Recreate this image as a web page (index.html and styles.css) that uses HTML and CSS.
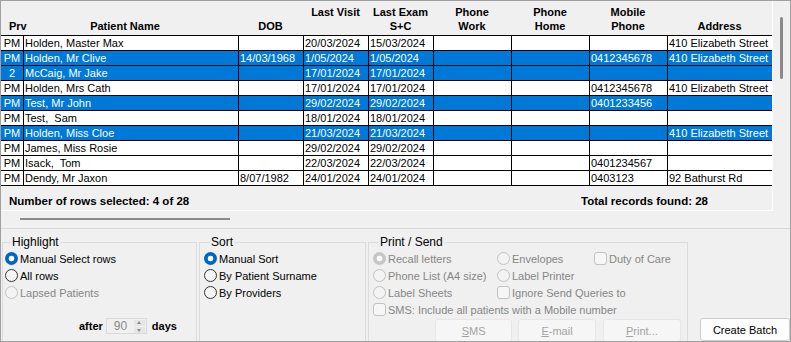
FILE: index.html
```html
<!DOCTYPE html>
<html lang="en">
<head>
    <meta charset="UTF-8">
    <title>Recall Batch</title>
    <link rel="stylesheet" href="styles.css">
</head>
<body>
<div class="window">
    <div class="top">
        <div class="grid-area">
            <div class="grid-panel">
                <!-- Column headers -->
                <div class="row head">
                    <div class="hc prv">Prv</div>
                    <div class="hc name">Patient Name</div>
                    <div class="hc">DOB</div>
                    <div class="hc">Last Visit<br>&nbsp;</div>
                    <div class="hc">Last Exam<br>S+C</div>
                    <div class="hc">Phone<br>Work</div>
                    <div class="hc">Phone<br>Home</div>
                    <div class="hc">Mobile<br>Phone</div>
                    <div class="hc">Address</div>
                </div>

                <div class="rows">
                    <div class="row">
                        <div class="c ctr">PM</div><div class="c">Holden, Master Max</div><div class="c"></div>
                        <div class="c">20/03/2024</div><div class="c">15/03/2024</div><div class="c"></div>
                        <div class="c"></div><div class="c"></div><div class="c">410 Elizabeth Street</div>
                    </div>
                    <div class="row sel">
                        <div class="c ctr">PM</div><div class="c">Holden, Mr Clive</div><div class="c">14/03/1968</div>
                        <div class="c">1/05/2024</div><div class="c">1/05/2024</div><div class="c"></div>
                        <div class="c"></div><div class="c">0412345678</div><div class="c">410 Elizabeth Street</div>
                    </div>
                    <div class="row sel">
                        <div class="c ctr">2</div><div class="c">McCaig, Mr Jake</div><div class="c"></div>
                        <div class="c">17/01/2024</div><div class="c">17/01/2024</div><div class="c"></div>
                        <div class="c"></div><div class="c"></div><div class="c"></div>
                    </div>
                    <div class="row">
                        <div class="c ctr">PM</div><div class="c">Holden, Mrs Cath</div><div class="c"></div>
                        <div class="c">17/01/2024</div><div class="c">17/01/2024</div><div class="c"></div>
                        <div class="c"></div><div class="c">0412345678</div><div class="c">410 Elizabeth Street</div>
                    </div>
                    <div class="row sel">
                        <div class="c ctr">PM</div><div class="c">Test, Mr John</div><div class="c"></div>
                        <div class="c">29/02/2024</div><div class="c">29/02/2024</div><div class="c"></div>
                        <div class="c"></div><div class="c">0401233456</div><div class="c"></div>
                    </div>
                    <div class="row">
                        <div class="c ctr">PM</div><div class="c">Test,&nbsp; Sam</div><div class="c"></div>
                        <div class="c">18/01/2024</div><div class="c">18/01/2024</div><div class="c"></div>
                        <div class="c"></div><div class="c"></div><div class="c"></div>
                    </div>
                    <div class="row sel">
                        <div class="c ctr">PM</div><div class="c">Holden, Miss Cloe</div><div class="c"></div>
                        <div class="c">21/03/2024</div><div class="c">21/03/2024</div><div class="c"></div>
                        <div class="c"></div><div class="c"></div><div class="c">410 Elizabeth Street</div>
                    </div>
                    <div class="row">
                        <div class="c ctr">PM</div><div class="c">James, Miss Rosie</div><div class="c"></div>
                        <div class="c">29/02/2024</div><div class="c">29/02/2024</div><div class="c"></div>
                        <div class="c"></div><div class="c"></div><div class="c"></div>
                    </div>
                    <div class="row">
                        <div class="c ctr">PM</div><div class="c">Isack,&nbsp; Tom</div><div class="c"></div>
                        <div class="c">22/03/2024</div><div class="c">22/03/2024</div><div class="c"></div>
                        <div class="c"></div><div class="c">0401234567</div><div class="c"></div>
                    </div>
                    <div class="row">
                        <div class="c ctr">PM</div><div class="c">Dendy, Mr Jaxon</div><div class="c">8/07/1982</div>
                        <div class="c">24/01/2024</div><div class="c">24/01/2024</div><div class="c"></div>
                        <div class="c"></div><div class="c">0403123</div><div class="c">92 Bathurst Rd</div>
                    </div>
                </div>

                <div class="grid-footer">
                    <span>Number of rows selected: 4 of 28</span>
                    <span>Total records found: 28</span>
                </div>
            </div>
            <div class="vscroll"><div class="thumb"></div></div>
        </div>
        <div class="hscroll"><div class="thumb"></div></div>
    </div>

    <div class="bottom">
        <fieldset class="group highlight">
            <legend>Highlight</legend>
            <div class="opt"><span class="radio on"></span>Manual Select rows</div>
            <div class="opt"><span class="radio"></span>All rows</div>
            <div class="opt off"><span class="radio"></span>Lapsed Patients</div>
            <div class="after">
                <b>after</b>
                <div class="spin">
                    <span class="spin-val">90</span>
                    <span class="spin-btns">
                        <span class="spin-up"></span>
                        <span class="spin-down"></span>
                    </span>
                </div>
                <b>days</b>
            </div>
        </fieldset>

        <fieldset class="group sort">
            <legend>Sort</legend>
            <div class="opt"><span class="radio on"></span>Manual Sort</div>
            <div class="opt"><span class="radio"></span>By Patient Surname</div>
            <div class="opt"><span class="radio"></span>By Providers</div>
        </fieldset>

        <fieldset class="group print">
            <legend>Print / Send</legend>
            <div class="print-grid">
                <div class="opt off"><span class="radio on"></span>Recall letters</div>
                <div class="opt off"><span class="radio"></span>Envelopes</div>
                <div class="opt off"><span class="check"></span>Duty of Care</div>
                <div class="opt off"><span class="radio"></span>Phone List (A4 size)</div>
                <div class="opt off span2"><span class="radio"></span>Label Printer</div>
                <div class="opt off"><span class="radio"></span>Label Sheets</div>
                <div class="opt off span2"><span class="check"></span>Ignore Send Queries to</div>
                <div class="opt off span3"><span class="check"></span>SMS: Include all patients with a Mobile number</div>
            </div>
            <div class="send-btns">
                <button class="btn dim"><u>S</u>MS</button>
                <button class="btn dim"><u>E</u>-mail</button>
                <button class="btn dim"><u>P</u>rint...</button>
            </div>
        </fieldset>

        <button class="btn create">Create Batch</button>
    </div>
</div>
</body>
</html>
```

FILE: styles.css
```css
body {
    margin: 0;
    font-family: "Liberation Sans", Arial, sans-serif;
    font-size: 11px;
    color: #000;
    background: #f0f0f0;
}
.window {
    width: 791px;
    height: 342px;
    box-sizing: border-box;
    border: 1px solid #a0a0a0;
    overflow: hidden;
    background: #f0f0f0;
}

/* upper grid */
.top {
    border-bottom: 1px solid #d9d9d9;
}
.grid-area {
    display: flex;
}
.grid-panel {
    width: 771px;
    border-right: 1px solid #fff;
    border-bottom: 1px solid #fff;
}
.row {
    display: grid;
    grid-template-columns: 22px 215px 65px 65px 65px 78px 78px 78px 105px;
    height: 15px;
    box-sizing: border-box;
    border-bottom: 1px solid #000;
    background: #fff;
}
.row.sel {
    background: #0078d7;
    color: #fff;
}
.row.head {
    height: 34px;
    border-bottom: none;
    background: #f0f0f0;
}
.hc {
    display: flex;
    flex-direction: column;
    justify-content: flex-end;
    padding-bottom: 2px;
    font-weight: bold;
    line-height: 14px;
    text-align: center;
}
.hc.prv {
    text-align: left;
    padding-left: 8px;
    white-space: nowrap;
}
.hc.name {
    padding-right: 11px;
}
.rows {
    border-top: 1px solid #000;
}
.c {
    line-height: 15px;
    height: 14px;
    padding-left: 1px;
    white-space: nowrap;
    overflow: hidden;
    border-left: 1px solid #000;
}
.c:first-child {
    border-left: none;
}
.c.ctr {
    text-align: center;
    padding-left: 0;
}
.grid-footer {
    display: flex;
    justify-content: space-between;
    height: 24px;
    box-sizing: border-box;
    padding: 8px 64px 0 8px;
    line-height: 14px;
    font-size: 11.5px;
    font-weight: bold;
    background: #f0f0f0;
}
.vscroll {
    flex: 1;
}
.vscroll .thumb {
    width: 3px;
    height: 62px;
    margin: 16px 0 0 7px;
    border-radius: 2px;
    background: #8a8a8a;
}
.hscroll {
    height: 17px;
    box-sizing: border-box;
    padding-top: 7px;
}
.hscroll .thumb {
    width: 210px;
    height: 2px;
    margin-left: 19px;
    background: #8a8a8a;
}

/* lower options */
.bottom {
    display: flex;
    align-items: flex-start;
    height: 112px;
    padding-top: 6px;
    box-sizing: border-box;
}
.group {
    margin: 0 0 0 2px;
    padding: 1px 0 0 4px;
    height: 113px;
    box-sizing: border-box;
    border: 1px solid #dcdcdc;
    min-width: 0;
}
.group legend {
    margin-left: 6px;
    padding: 0 1px;
    font-size: 12px;
    line-height: 14px;
}
.highlight {
    margin-left: 1px;
    width: 195px;
    padding-left: 2px;
}
.sort {
    width: 167px;
}
.print {
    width: 320px;
    padding-left: 4px;
}
.opt {
    display: flex;
    align-items: center;
    gap: 2px;
    height: 17px;
    white-space: nowrap;
}
.opt.off {
    color: #868686;
}
.radio {
    width: 13px;
    height: 13px;
    box-sizing: border-box;
    border: 1px solid #333;
    border-radius: 50%;
    background: #f5f5f5;
    flex: none;
}
.radio.on {
    border: none;
    background: radial-gradient(circle, #fff 0 2.5px, #0067c0 3.2px);
}
.off .radio {
    border-color: #c2c2c2;
    background: #f3f3f3;
}
.off .radio.on {
    border: none;
    background: radial-gradient(circle, #fff 0 2.5px, #c6c6c6 3.2px);
}
.check {
    width: 13px;
    height: 13px;
    box-sizing: border-box;
    border: 1px solid #c2c2c2;
    border-radius: 3px;
    background: #f6f6f6;
    flex: none;
}
.after {
    display: flex;
    align-items: center;
    margin: 17px 0 0 74px;
    height: 16px;
}
.after b {
    font-weight: bold;
}
.spin {
    display: flex;
    align-items: center;
    width: 41px;
    height: 16px;
    box-sizing: border-box;
    margin: 0 5px 0 3px;
    border: 1px solid #dadada;
    background: #f0f0f0;
}
.spin-val {
    flex: 1;
    padding-left: 7px;
    color: #8a8a8a;
    font-size: 12px;
}
.spin-btns {
    display: flex;
    flex-direction: column;
    gap: 1px;
    margin-right: 1px;
}
.spin-up,
.spin-down {
    display: block;
    width: 11px;
    height: 6px;
    position: relative;
    background: #e6e6e6;
}
.spin-up::after,
.spin-down::after {
    content: "";
    position: absolute;
    left: 3px;
    border-left: 2.5px solid transparent;
    border-right: 2.5px solid transparent;
}
.spin-up::after {
    top: 1px;
    border-bottom: 3px solid #8a8a8a;
}
.spin-down::after {
    top: 2px;
    border-top: 3px solid #8a8a8a;
}
.print-grid {
    display: grid;
    grid-template-columns: 124px 97px 1fr;
}
.span2 {
    grid-column: span 2;
}
.span3 {
    grid-column: span 3;
}
.send-btns {
    display: flex;
    margin: 1px 0 0 62px;
}
.btn {
    font-family: "Liberation Sans", Arial, sans-serif;
    font-size: 11px;
    height: 23px;
    padding: 0;
    border-radius: 3px;
    box-sizing: border-box;
}
.btn.dim {
    width: 78px;
    margin-right: 6px;
    border: 1px solid #e6e6e6;
    background: #f6f6f6;
    color: #a2a2a2;
}
.btn.dim:last-child {
    width: 79px;
    margin-left: 1px;
}
.create {
    align-self: flex-end;
    width: 90px;
    margin-left: 12px;
    border: 1px solid #cccccc;
    background: #fdfdfd;
    color: #000;
}
```
